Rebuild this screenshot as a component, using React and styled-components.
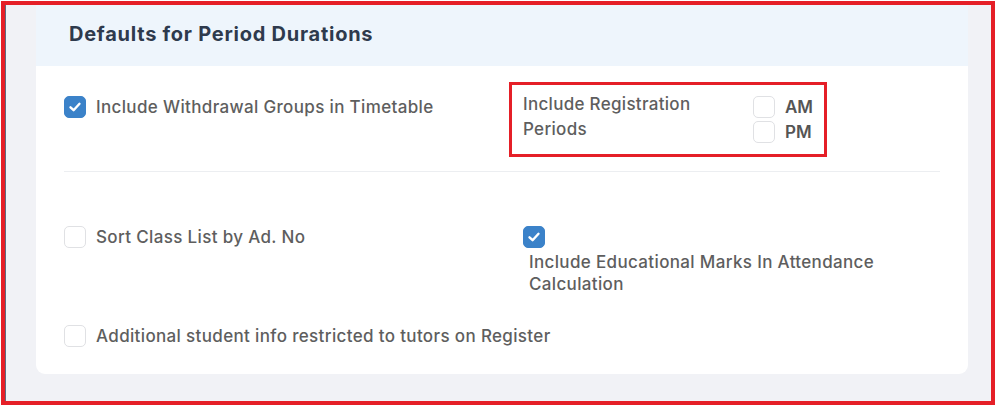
import React, { useState } from "react";
import styled, { createGlobalStyle } from "styled-components";

const GlobalStyle = createGlobalStyle`
  html, body {
    margin: 0;
    padding: 0;
    background: #ffffff;
  }
  body {
    font-family: Inter, "Noto Sans", "Liberation Sans", sans-serif;
  }
`;

const Frame = styled.div`
  margin: 1px;
  width: 994px;
  height: 404px;
  box-sizing: border-box;
  border: 4px solid #e51f27;
  background: #f1f2f6;
  box-shadow: inset 1px 0 0 #5f6b80;
  overflow: hidden;
`;

const Card = styled.div`
  margin: 0 23px 0 31px;
  height: 369px;
  background: #ffffff;
  border-radius: 0 0 9px 9px;
  display: flex;
  flex-direction: column;
`;

const CardHeader = styled.div`
  height: 61px;
  background: #eef5fc;
  padding-left: 33px;
  display: flex;
  align-items: center;
  padding-bottom: 4px;
  box-sizing: border-box;
`;

const Title = styled.h2`
  margin: 0;
  font-size: 20px;
  font-weight: 700;
  color: #2e3a4d;
  letter-spacing: 0.75px;
`;

const CardBody = styled.div`
  padding: 30px 28px 0 28px;
`;

const Grid = styled.div`
  display: grid;
  grid-template-columns: 417px 1fr;
  column-gap: 42px;
  row-gap: ${(p) => p.$rowGap || 0}px;
  align-items: start;
`;

const Divider = styled.hr`
  border: none;
  height: 1px;
  background: #eceef1;
  margin: 28px 0 54px 0;
`;

const Option = styled.label`
  display: flex;
  flex-direction: ${(p) => (p.$stacked ? "column" : "row")};
  align-items: ${(p) => (p.$stacked ? "flex-start" : "center")};
  gap: ${(p) => (p.$stacked ? "0" : "10px")};
  grid-column: ${(p) => (p.$wide ? "1 / -1" : "auto")};
  font-size: 17px;
  font-weight: 500;
  letter-spacing: 0.35px;
  line-height: 22px;
  color: #5e5e5e;
  cursor: pointer;
`;

const OptionText = styled.span`
  padding: ${(p) => (p.$indent ? "3px 0 0 6px" : "0")};
`;

const Box = styled.span`
  flex: none;
  width: 22px;
  height: 22px;
  box-sizing: border-box;
  border-radius: 5px;
  border: 1.5px solid ${(p) => (p.$checked ? "#3b82c9" : "#e0e1e4")};
  background: ${(p) => (p.$checked ? "#3b82c9" : "#ffffff")};
  display: flex;
  align-items: center;
  justify-content: center;
`;

const RegField = styled.div`
  display: flex;
  align-items: flex-start;
  outline: 3px solid #e51f27;
  outline-offset: 11px;
  width: 290px;
`;

const RegLabel = styled.div`
  width: 190px;
  margin: -4px 40px 0 0;
  font-size: 17px;
  font-weight: 500;
  letter-spacing: 0.3px;
  line-height: 25px;
  color: #5e5e5e;
`;

const RegChoices = styled.div`
  display: flex;
  flex-direction: column;
  gap: 3px;
`;

const Choice = styled.label`
  display: flex;
  align-items: center;
  gap: 10px;
  font-size: 17px;
  font-weight: 600;
  color: #555555;
  line-height: 22px;
  cursor: pointer;
`;

const Check = ({ checked }) => (
  <Box $checked={checked}>
    {checked && (
      <svg width="14" height="14" viewBox="0 0 14 14">
        <polyline
          points="2.5,7.3 5.6,10.2 11.5,3.8"
          fill="none"
          stroke="#ffffff"
          strokeWidth="2.4"
          strokeLinecap="round"
          strokeLinejoin="round"
        />
      </svg>
    )}
  </Box>
);

const CheckOption = ({ checked, onToggle, children, stacked, wide }) => (
  <Option $stacked={stacked} $wide={wide} onClick={onToggle}>
    <Check checked={checked} />
    <OptionText $indent={stacked}>{children}</OptionText>
  </Option>
);

const App = () => {
  const [opts, setOpts] = useState({
    withdrawal: true,
    am: false,
    pm: false,
    sortClass: false,
    eduMarks: true,
    tutorsOnly: false,
  });

  const toggle = (key) => () => setOpts((o) => ({ ...o, [key]: !o[key] }));

  return (
    <>
      <GlobalStyle />
      <Frame>
        <Card>
          <CardHeader>
            <Title>Defaults for Period Durations</Title>
          </CardHeader>
          <CardBody>
            <Grid>
              <CheckOption checked={opts.withdrawal} onToggle={toggle("withdrawal")}>
                Include Withdrawal Groups in Timetable
              </CheckOption>
              <RegField>
                <RegLabel>Include Registration Periods</RegLabel>
                <RegChoices>
                  <Choice onClick={toggle("am")}>
                    <Check checked={opts.am} />
                    AM
                  </Choice>
                  <Choice onClick={toggle("pm")}>
                    <Check checked={opts.pm} />
                    PM
                  </Choice>
                </RegChoices>
              </RegField>
            </Grid>

            <Divider />

            <Grid $rowGap={30}>
              <CheckOption checked={opts.sortClass} onToggle={toggle("sortClass")}>
                Sort Class List by Ad. No
              </CheckOption>
              <CheckOption stacked checked={opts.eduMarks} onToggle={toggle("eduMarks")}>
                Include Educational Marks In Attendance Calculation
              </CheckOption>
              <CheckOption wide checked={opts.tutorsOnly} onToggle={toggle("tutorsOnly")}>
                Additional student info restricted to tutors on Register
              </CheckOption>
            </Grid>
          </CardBody>
        </Card>
      </Frame>
    </>
  );
};

export default App;
